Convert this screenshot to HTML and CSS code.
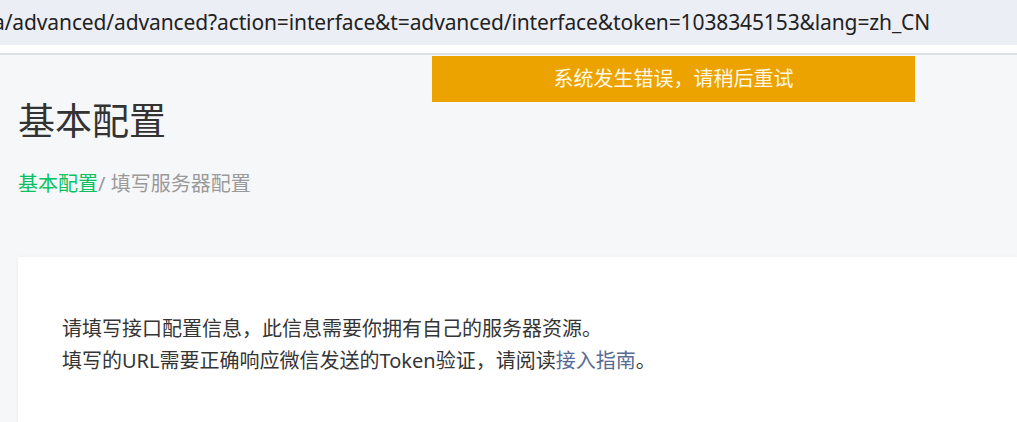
FILE: index.html
```html
<!DOCTYPE html>
<html lang="zh-CN">
<head>
<meta charset="utf-8">
<title>基本配置</title>
<link rel="stylesheet" href="styles.css">
</head>
<body>
<div class="urlbar"><span class="url">a/advanced/advanced?action=interface&amp;t=advanced/interface&amp;token=1038345153&amp;lang=zh_CN</span></div>
<div class="divider"></div>
<main class="page">
  <div class="toast">系统发生错误，请稍后重试</div>
  <h1 class="title">基本配置</h1>
  <nav class="crumbs"><a class="crumb-link" href="#">基本配置</a>/ 填写服务器配置</nav>
  <section class="card">
    <p class="desc">请填写接口配置信息，此信息需要你拥有自己的服务器资源。<br>填写的URL需要正确响应微信发送的Token验证，请阅读<a class="link" href="#">接入指南</a>。</p>
  </section>
</main>
</body>
</html>
```

FILE: styles.css
```css
html, body {
  margin: 0;
  padding: 0;
  overflow: hidden;
}
body {
  background: #f6f7f9;
  font-family: "Noto Sans", "Noto Sans CJK SC", sans-serif;
  color: #353535;
}
.urlbar {
  height: 45px;
  background: #eceef6;
  overflow: hidden;
  white-space: nowrap;
}
.url {
  display: block;
  margin-left: -7px;
  font-size: 21px;
  letter-spacing: -0.12px;
  line-height: 44px;
  color: #222;
}
.divider {
  height: 8px;
  background: #ffffff;
  border-bottom: 2px solid #dfe0e3;
}
.page {
  position: relative;
  padding: 46px 0 0 18px;
}
.toast {
  position: absolute;
  top: 1px;
  left: 432px;
  width: 483px;
  height: 46px;
  background: #eca300;
  color: #fff8e6;
  font-size: 20px;
  line-height: 46px;
  text-align: center;
}
.title {
  margin: 0;
  font-size: 37px;
  font-weight: normal;
  line-height: 40px;
  color: #333;
}
.crumbs {
  margin-top: 29px;
  font-size: 20px;
  line-height: 28px;
  color: #9a9a9a;
}
.crumb-link {
  color: #07c160;
  text-decoration: none;
}
.card {
  margin-top: 59px;
  background: #fff;
  box-shadow: 0 0 4px rgba(0, 0, 0, 0.04);
  padding: 56px 0 60px 44px;
  min-height: 120px;
}
.desc {
  margin: 0;
  font-size: 20px;
  line-height: 32px;
  color: #353535;
}
.link {
  color: #576b95;
  text-decoration: none;
}
```
